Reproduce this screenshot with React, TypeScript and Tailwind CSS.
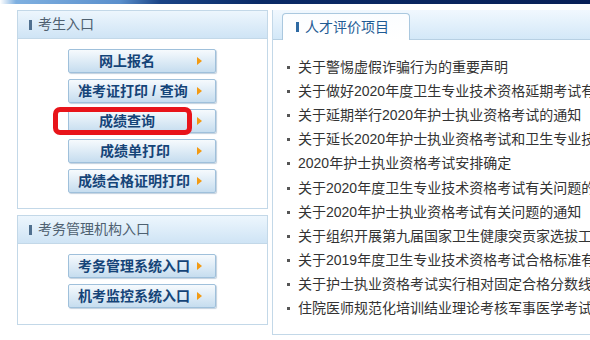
import React from 'react';

const font = { fontFamily: '"Liberation Sans", "Noto Sans CJK SC", sans-serif' };

interface Entry {
    label: string;
    pad: string;
    marked?: boolean;
}

const candidateLinks: Entry[] = [
    { label: '网上报名', pad: 'pl-[30px]' },
    { label: '准考证打印 / 查询', pad: 'pl-[9px]' },
    { label: '成绩查询', pad: 'pl-[30px]', marked: true },
    { label: '成绩单打印', pad: 'pl-[31px]' },
    { label: '成绩合格证明打印', pad: 'pl-[9px]' },
];

const agencyLinks: Entry[] = [
    { label: '考务管理系统入口', pad: 'pl-[9px]' },
    { label: '机考监控系统入口', pad: 'pl-[9px]' },
];

const news = [
    '关于警惕虚假诈骗行为的重要声明',
    '关于做好2020年度卫生专业技术资格延期考试有关工作的通知',
    '关于延期举行2020年护士执业资格考试的通知',
    '关于延长2020年护士执业资格考试和卫生专业技术资格考试报名时间的通知',
    '2020年护士执业资格考试安排确定',
    '关于2020年度卫生专业技术资格考试有关问题的通知',
    '关于2020年护士执业资格考试有关问题的通知',
    '关于组织开展第九届国家卫生健康突贡家选拔工作的通知',
    '关于2019年度卫生专业技术资格考试合格标准有关问题的通知',
    '关于护士执业资格考试实行相对固定合格分数线的公告',
    '住院医师规范化培训结业理论考核军事医学考试安排',
];

const Arrow = () => (
    <svg width="5" height="8" viewBox="0 0 5 8" className="absolute right-[13px] top-1/2 -translate-y-1/2">
        <path d="M0 0 L5 4 L0 8 Z" fill="#f39a12" />
    </svg>
);

const EntryButton: React.FC<{ entry: Entry }> = ({ entry }) => (
    <div className="relative w-[148px]">
        <div
            className={`relative flex h-[24px] items-center rounded-[2px] border border-[#9fc0db] bg-gradient-to-b from-[#f6fafd] to-[#c6ddef] shadow-[1px_1px_1px_rgba(120,150,180,0.45)] ${entry.pad} text-[14px] font-bold text-[#154478]`}
        >
            {entry.label}
            <Arrow />
        </div>
        {entry.marked && (
            <div className="absolute left-[-15px] top-[-2px] h-[28px] w-[139px] rounded-[7px] border-[5px] border-[#e8141a]" />
        )}
    </div>
);

const PanelHeader: React.FC<{ title: string }> = ({ title }) => (
    <div className="flex h-[28px] items-center gap-[6px] border-b border-[#c3d8e8] bg-gradient-to-b from-[#edf6fd] to-[#cfe4f5] pl-[11px] text-[14px] text-[#4e6070]">
        <span className="h-[10px] w-[3px] bg-[#50708f]" />
        {title}
    </div>
);

export default function App() {
    return (
        <div className="h-[340px] w-[590px] overflow-hidden bg-white" style={font}>
            <div className="h-[4px] bg-[linear-gradient(90deg,#ffffff_0px,#7fb0e0_16px,#5a8fcc_120px,#1a4486_160px,#0a2a66_260px,#082057_590px)]" />

            <div className="mt-[6px] flex gap-[4px] pl-[17px]">
                <div className="flex w-[251px] shrink-0 flex-col gap-[6px]">
                    <div className="h-[199px] border border-[#c3d8e8]">
                        <PanelHeader title="考生入口" />
                        <div className="flex flex-col gap-[6px] pl-[50px] pt-[10px]">
                            {candidateLinks.map(e => (
                                <EntryButton key={e.label} entry={e} />
                            ))}
                        </div>
                    </div>
                    <div className="h-[110px] border border-[#c3d8e8]">
                        <PanelHeader title="考务管理机构入口" />
                        <div className="flex flex-col gap-[6px] pl-[50px] pt-[10px]">
                            {agencyLinks.map(e => (
                                <EntryButton key={e.label} entry={e} />
                            ))}
                        </div>
                    </div>
                </div>

                <div className="h-[325px] min-w-0 flex-1 border-b border-l border-[#c3d8e8]">
                    <div className="flex h-[30px] items-end border-b border-[#b7d0e3] bg-gradient-to-b from-[#f1f8fe] to-[#d3e8f8] pl-[9px]">
                        <div className="mb-[-1px] flex h-[27px] w-[128px] items-center gap-[6px] rounded-t-[4px] border border-b-0 border-[#aac8df] bg-gradient-to-b from-[#fbfdff] to-white pl-[13px] text-[14px] text-[#1f5b94]">
                            <span className="h-[10px] w-[3px] bg-[#2e6aa3]" />
                            人才评价项目
                        </div>
                    </div>
                    <ul className="pt-[15px]">
                        {news.map(n => (
                            <li key={n} className="flex h-[24.2px] items-center whitespace-nowrap text-[14px] text-[#333]">
                                <span className="ml-[14px] mr-[8px] h-[3px] w-[3px] shrink-0 bg-[#555]" />
                                {n}
                            </li>
                        ))}
                    </ul>
                </div>
            </div>
        </div>
    );
}
